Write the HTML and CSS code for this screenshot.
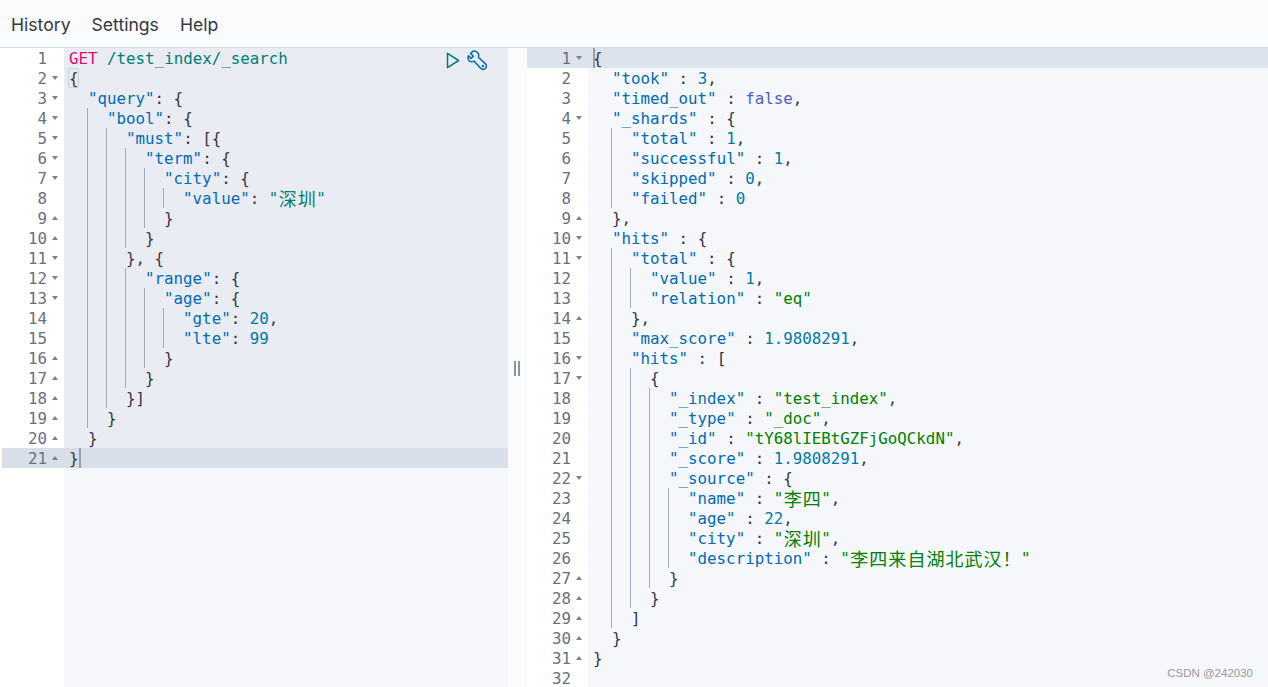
FILE: index.html
```html
<!DOCTYPE html>
<html lang="zh">
<head>
<meta charset="utf-8">
<title>Console</title>
<link rel="stylesheet" href="styles.css">
</head>
<body>
<div class="app">
  <nav class="menu"><span>History</span><span>Settings</span><span>Help</span></nav>
  <main class="panes">
    <section class="pane left">
      <div class="tools">
        <svg class="play" width="14" height="17" viewBox="0 0 14 17"><path d="M1.5 1.3 L12.6 8.5 L1.5 15.7 Z" fill="none" stroke="#017d73" stroke-width="1.5" stroke-linejoin="round"/></svg>
        <svg class="wrench" width="21" height="21" viewBox="0 0 22 22"><path d="M6.5 1.2 L3.8 3.6 L6.6 6.5 L4.4 8.8 L1.5 6 C0.6 8.5 1.1 10.5 2.7 11.6 C4.1 12.5 5.7 12.4 7.4 11.6 L14 18.9 C15.4 20.5 17.6 20.8 19.2 19.4 C20.8 17.9 20.6 15.7 19 14.3 L11.9 7.6 C12.7 5.6 12.3 3.9 11 2.7 C9.7 1.4 8.1 0.9 6.5 1.2 Z" fill="none" stroke="#006bb4" stroke-width="1.6" stroke-linejoin="round"/><circle cx="16.6" cy="16.7" r="1.3" fill="#006bb4"/></svg>
      </div>
      <div class="gutter">
        <div class="gl"><b>1</b></div>
        <div class="gl"><b>2</b><u class="down"></u></div>
        <div class="gl"><b>3</b><u class="down"></u></div>
        <div class="gl"><b>4</b><u class="down"></u></div>
        <div class="gl"><b>5</b><u class="down"></u></div>
        <div class="gl"><b>6</b><u class="down"></u></div>
        <div class="gl"><b>7</b><u class="down"></u></div>
        <div class="gl"><b>8</b></div>
        <div class="gl"><b>9</b><u class="up"></u></div>
        <div class="gl"><b>10</b><u class="up"></u></div>
        <div class="gl"><b>11</b><u class="down"></u></div>
        <div class="gl"><b>12</b><u class="down"></u></div>
        <div class="gl"><b>13</b><u class="down"></u></div>
        <div class="gl"><b>14</b></div>
        <div class="gl"><b>15</b></div>
        <div class="gl"><b>16</b><u class="up"></u></div>
        <div class="gl"><b>17</b><u class="up"></u></div>
        <div class="gl"><b>18</b><u class="up"></u></div>
        <div class="gl"><b>19</b><u class="up"></u></div>
        <div class="gl"><b>20</b><u class="up"></u></div>
        <div class="gl active"><b>21</b><u class="up"></u></div>
      </div>
      <div class="code">
        <div class="selected">
          <div class="l"><span class="m">GET</span> <span class="url">/test_index/_search</span></div>
          <div class="l"><span class="match">{</span></div>
          <div class="l"><i class="p"></i><span class="k">"query"</span><span class="o">: {</span></div>
          <div class="l"><i class="p"></i><i class="g"></i><span class="k">"bool"</span><span class="o">: {</span></div>
          <div class="l"><i class="p"></i><i class="g"></i><i class="g"></i><span class="k">"must"</span><span class="o">: [{</span></div>
          <div class="l"><i class="p"></i><i class="g"></i><i class="g"></i><i class="g"></i><span class="k">"term"</span><span class="o">: {</span></div>
          <div class="l"><i class="p"></i><i class="g"></i><i class="g"></i><i class="g"></i><i class="g"></i><span class="k">"city"</span><span class="o">: {</span></div>
          <div class="l"><i class="p"></i><i class="g"></i><i class="g"></i><i class="g"></i><i class="g"></i><i class="g"></i><span class="k">"value"</span><span class="o">: </span><span class="url">"<em>深</em><em>圳</em>"</span></div>
          <div class="l"><i class="p"></i><i class="g"></i><i class="g"></i><i class="g"></i><i class="g"></i><span class="o">}</span></div>
          <div class="l"><i class="p"></i><i class="g"></i><i class="g"></i><i class="g"></i><span class="o">}</span></div>
          <div class="l"><i class="p"></i><i class="g"></i><i class="g"></i><span class="o">}, {</span></div>
          <div class="l"><i class="p"></i><i class="g"></i><i class="g"></i><i class="g"></i><span class="k">"range"</span><span class="o">: {</span></div>
          <div class="l"><i class="p"></i><i class="g"></i><i class="g"></i><i class="g"></i><i class="g"></i><span class="k">"age"</span><span class="o">: {</span></div>
          <div class="l"><i class="p"></i><i class="g"></i><i class="g"></i><i class="g"></i><i class="g"></i><i class="g"></i><span class="k">"gte"</span><span class="o">: </span><span class="n">20</span><span class="o">,</span></div>
          <div class="l"><i class="p"></i><i class="g"></i><i class="g"></i><i class="g"></i><i class="g"></i><i class="g"></i><span class="k">"lte"</span><span class="o">: </span><span class="n">99</span></div>
          <div class="l"><i class="p"></i><i class="g"></i><i class="g"></i><i class="g"></i><i class="g"></i><span class="o">}</span></div>
          <div class="l"><i class="p"></i><i class="g"></i><i class="g"></i><i class="g"></i><span class="o">}</span></div>
          <div class="l"><i class="p"></i><i class="g"></i><i class="g"></i><span class="o">}]</span></div>
          <div class="l"><i class="p"></i><i class="g"></i><span class="o">}</span></div>
          <div class="l"><i class="p"></i><span class="o">}</span></div>
        </div>
        <div class="l active"><span class="o">}</span><span class="cursor"></span></div>
      </div>
    </section>
    <div class="divider"><span class="grip"></span></div>
    <section class="pane right">
      <div class="gutter">
        <div class="gl active"><b>1</b><u class="down"></u></div>
        <div class="gl"><b>2</b></div>
        <div class="gl"><b>3</b></div>
        <div class="gl"><b>4</b><u class="down"></u></div>
        <div class="gl"><b>5</b></div>
        <div class="gl"><b>6</b></div>
        <div class="gl"><b>7</b></div>
        <div class="gl"><b>8</b></div>
        <div class="gl"><b>9</b><u class="up"></u></div>
        <div class="gl"><b>10</b><u class="down"></u></div>
        <div class="gl"><b>11</b><u class="down"></u></div>
        <div class="gl"><b>12</b></div>
        <div class="gl"><b>13</b></div>
        <div class="gl"><b>14</b><u class="up"></u></div>
        <div class="gl"><b>15</b></div>
        <div class="gl"><b>16</b><u class="down"></u></div>
        <div class="gl"><b>17</b><u class="down"></u></div>
        <div class="gl"><b>18</b></div>
        <div class="gl"><b>19</b></div>
        <div class="gl"><b>20</b></div>
        <div class="gl"><b>21</b></div>
        <div class="gl"><b>22</b><u class="down"></u></div>
        <div class="gl"><b>23</b></div>
        <div class="gl"><b>24</b></div>
        <div class="gl"><b>25</b></div>
        <div class="gl"><b>26</b></div>
        <div class="gl"><b>27</b><u class="up"></u></div>
        <div class="gl"><b>28</b><u class="up"></u></div>
        <div class="gl"><b>29</b><u class="up"></u></div>
        <div class="gl"><b>30</b><u class="up"></u></div>
        <div class="gl"><b>31</b><u class="up"></u></div>
        <div class="gl"><b>32</b></div>
      </div>
      <div class="code">
        <div class="l active"><span class="cursor first"></span><span class="o">{</span></div>
        <div class="l"><i class="p"></i><span class="k">"took"</span><span class="o"> : </span><span class="n">3</span><span class="o">,</span></div>
        <div class="l"><i class="p"></i><span class="k">"timed_out"</span><span class="o"> : </span><span class="b">false</span><span class="o">,</span></div>
        <div class="l"><i class="p"></i><span class="k">"_shards"</span><span class="o"> : {</span></div>
        <div class="l"><i class="p"></i><i class="g"></i><span class="k">"total"</span><span class="o"> : </span><span class="n">1</span><span class="o">,</span></div>
        <div class="l"><i class="p"></i><i class="g"></i><span class="k">"successful"</span><span class="o"> : </span><span class="n">1</span><span class="o">,</span></div>
        <div class="l"><i class="p"></i><i class="g"></i><span class="k">"skipped"</span><span class="o"> : </span><span class="n">0</span><span class="o">,</span></div>
        <div class="l"><i class="p"></i><i class="g"></i><span class="k">"failed"</span><span class="o"> : </span><span class="n">0</span></div>
        <div class="l"><i class="p"></i><span class="o">},</span></div>
        <div class="l"><i class="p"></i><span class="k">"hits"</span><span class="o"> : {</span></div>
        <div class="l"><i class="p"></i><i class="g"></i><span class="k">"total"</span><span class="o"> : {</span></div>
        <div class="l"><i class="p"></i><i class="g"></i><i class="g"></i><span class="k">"value"</span><span class="o"> : </span><span class="n">1</span><span class="o">,</span></div>
        <div class="l"><i class="p"></i><i class="g"></i><i class="g"></i><span class="k">"relation"</span><span class="o"> : </span><span class="s">"eq"</span></div>
        <div class="l"><i class="p"></i><i class="g"></i><span class="o">},</span></div>
        <div class="l"><i class="p"></i><i class="g"></i><span class="k">"max_score"</span><span class="o"> : </span><span class="n">1.9808291</span><span class="o">,</span></div>
        <div class="l"><i class="p"></i><i class="g"></i><span class="k">"hits"</span><span class="o"> : [</span></div>
        <div class="l"><i class="p"></i><i class="g"></i><i class="g"></i><span class="o">{</span></div>
        <div class="l"><i class="p"></i><i class="g"></i><i class="g"></i><i class="g"></i><span class="k">"_index"</span><span class="o"> : </span><span class="s">"test_index"</span><span class="o">,</span></div>
        <div class="l"><i class="p"></i><i class="g"></i><i class="g"></i><i class="g"></i><span class="k">"_type"</span><span class="o"> : </span><span class="s">"_doc"</span><span class="o">,</span></div>
        <div class="l"><i class="p"></i><i class="g"></i><i class="g"></i><i class="g"></i><span class="k">"_id"</span><span class="o"> : </span><span class="s">"tY68lIEBtGZFjGoQCkdN"</span><span class="o">,</span></div>
        <div class="l"><i class="p"></i><i class="g"></i><i class="g"></i><i class="g"></i><span class="k">"_score"</span><span class="o"> : </span><span class="n">1.9808291</span><span class="o">,</span></div>
        <div class="l"><i class="p"></i><i class="g"></i><i class="g"></i><i class="g"></i><span class="k">"_source"</span><span class="o"> : {</span></div>
        <div class="l"><i class="p"></i><i class="g"></i><i class="g"></i><i class="g"></i><i class="g"></i><span class="k">"name"</span><span class="o"> : </span><span class="s">"<em>李</em><em>四</em>"</span><span class="o">,</span></div>
        <div class="l"><i class="p"></i><i class="g"></i><i class="g"></i><i class="g"></i><i class="g"></i><span class="k">"age"</span><span class="o"> : </span><span class="n">22</span><span class="o">,</span></div>
        <div class="l"><i class="p"></i><i class="g"></i><i class="g"></i><i class="g"></i><i class="g"></i><span class="k">"city"</span><span class="o"> : </span><span class="s">"<em>深</em><em>圳</em>"</span><span class="o">,</span></div>
        <div class="l"><i class="p"></i><i class="g"></i><i class="g"></i><i class="g"></i><i class="g"></i><span class="k">"description"</span><span class="o"> : </span><span class="s">"<em>李</em><em>四</em><em>来</em><em>自</em><em>湖</em><em>北</em><em>武</em><em>汉</em><em>！</em>"</span></div>
        <div class="l"><i class="p"></i><i class="g"></i><i class="g"></i><i class="g"></i><span class="o">}</span></div>
        <div class="l"><i class="p"></i><i class="g"></i><i class="g"></i><span class="o">}</span></div>
        <div class="l"><i class="p"></i><i class="g"></i><span class="o">]</span></div>
        <div class="l"><i class="p"></i><span class="o">}</span></div>
        <div class="l"><span class="o">}</span></div>
        <div class="l"></div>
      </div>
    </section>
  </main>
  <div class="mark">CSDN @242030</div>
</div>
</body>
</html>
```

FILE: styles.css
```css
* { box-sizing: border-box; }
html, body { margin: 0; height: 100%; overflow: hidden; }
body { background: #fafbfd; }
.app { height: 687px; display: flex; flex-direction: column; position: relative; }
.menu {
  height: 48px; flex: none; display: flex; gap: 21px; align-items: center;
  padding: 3px 0 0 11px;
  font: 17.6px/24px Inter, "Liberation Sans", sans-serif; color: #343741;
  background: #fafbfd; border-bottom: 1px solid #d3dae6;
}
.panes { flex: 1; display: flex; min-height: 0; overflow: hidden; }
.pane { display: flex; position: relative; overflow: hidden; font: 15.8px/22px "DejaVu Sans Mono", monospace; background: #f5f7fa; }
.left { width: 508px; flex: none; border-left: 2px solid #fff; }
.right { flex: 1; }
.divider { width: 19px; flex: none; display: flex; align-items: center; justify-content: center; background: #fafbfd; }
.grip { display: block; width: 6px; height: 15px; margin: 0 0 -2px -1px; border-left: 2px solid #8d929c; border-right: 2px solid #8d929c; }
.gutter { flex: none; background: #fff; color: #69707d; }
.left .gutter { width: 62px; }
.right .gutter { width: 61px; }
.gl { height: 20px; display: flex; align-items: flex-start; justify-content: flex-end; position: relative; padding-right: 17px; }
.gl b { font-weight: 400; }
.gl u { position: absolute; right: 6px; top: 8px; width: 0; height: 0; border-left: 3.5px solid transparent; border-right: 3.5px solid transparent; }
.gl u.down { border-top: 4px solid #7d828c; }
.gl u.up { border-bottom: 4px solid #7d828c; }
.gl.active, .l.active { background: #dde3ec; }
.left .active { background: #d9dfe8; }
.code { flex: 1; min-width: 0; }
.selected { background: #e9edf3; }
.l { height: 20px; padding-left: 5px; white-space: pre; color: #343741; position: relative; }
.l i { display: inline-block; width: 2ch; height: 20px; vertical-align: top; }
.l i.g { box-shadow: -1px 0 0 #a5abb6; }
.l em { display: inline-block; width: 19.04px; font-style: normal; text-align: center; font-family: "Noto Sans CJK SC", "DejaVu Sans Mono", sans-serif; font-size: 18px; line-height: 21px; height: 20px; vertical-align: top; }
.m { color: #dd0a73; }
.url { color: #017d73; }
.k { color: #006bb4; }
.o { color: #343741; }
.n { color: #0079a5; }
.b { color: #4a5fc1; }
.s { color: #008000; }
.match { display: inline-block; height: 20px; margin-left: -1px; padding-left: 1px; box-shadow: inset 0 0 0 1px #ccd2dc; border-radius: 2px; vertical-align: top; }
.cursor { position: absolute; top: 0; width: 2px; height: 20px; background: #9aa0aa; }
.cursor.first { left: 5px; }
.tools { position: absolute; top: 2px; left: 444px; display: flex; align-items: center; gap: 7px; z-index: 2; }
.mark { position: absolute; right: 15px; bottom: 7px; font: 11.5px/14px "Liberation Sans", sans-serif; color: #999; }
```
